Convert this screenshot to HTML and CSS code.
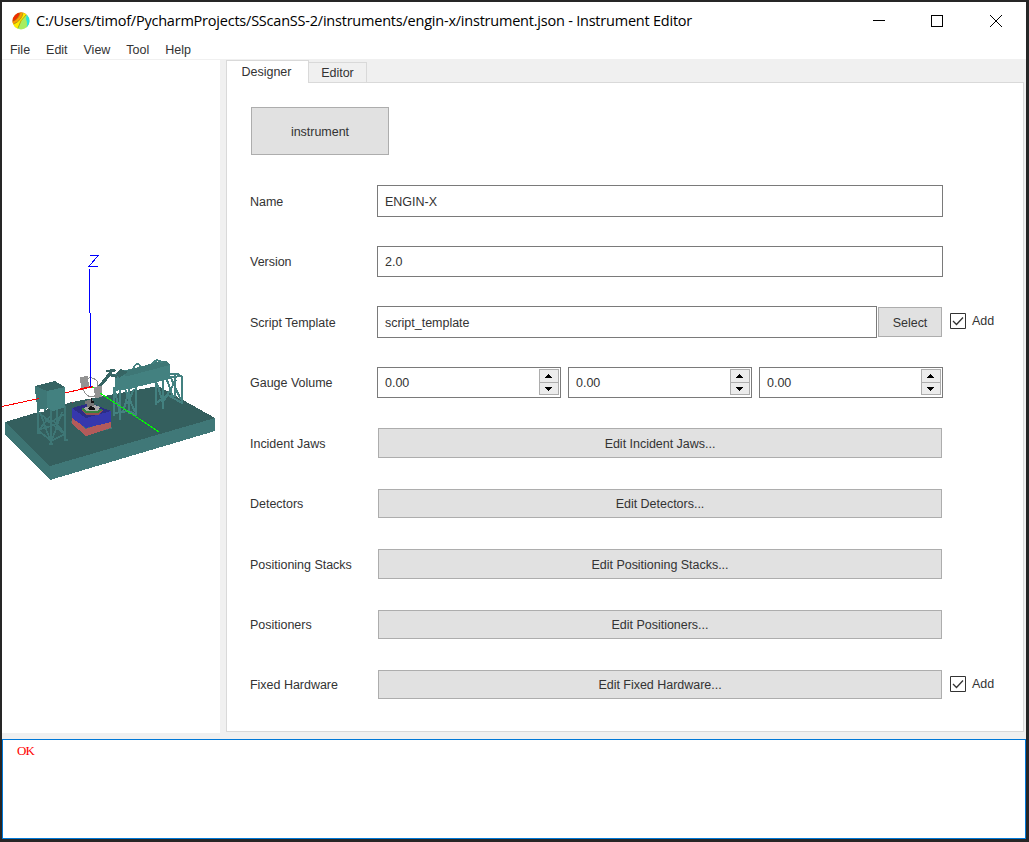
FILE: index.html
```html
<!DOCTYPE html>
<html lang="en">
<head>
<meta charset="utf-8">
<title>Instrument Editor</title>
<link rel="stylesheet" href="styles.css">
</head>
<body>
<div class="window">
  <header class="titlebar">
    <svg class="app-icon" width="18" height="18" viewBox="0 0 18 18">
      <defs><clipPath id="disc"><circle cx="9" cy="9" r="8.5"/></clipPath></defs>
      <g clip-path="url(#disc)">
        <rect width="18" height="18" fill="#a8ed60"/>
        <path d="M0 0H18L8 7L2 11H0Z" fill="#ee2c00"/>
        <path d="M0 10Q7 7 8 0H12Q9 10 0 13Z" fill="#ff9d00"/>
        <path d="M0 13Q10 9 11 0H16Q11 7 9 10Q7 14 5 18H0Z" fill="#ffed00"/>
        <path d="M15 1L18 3V18H14Q16 12 14 7Z" fill="#27e3dc"/>
        <path d="M1 9Q7 7 8 1M2 12Q10 8 11 1M6 16Q8 8 14 3" fill="none" stroke="#857b20" stroke-width=".6"/>
      </g>
    </svg>
    <h1 class="title">C:/Users/timof/PycharmProjects/SScanSS-2/instruments/engin-x/instrument.json - Instrument Editor</h1>
    <svg class="controls" width="132" height="14" viewBox="0 0 132 14" shape-rendering="crispEdges">
      <path d="M0 6.5H12M58.500 1.500H69.500V12.500H58.500Z" fill="none" stroke="#000"/>
      <path d="M117 1L129 13M129 1L117 13" fill="none" stroke="#000" shape-rendering="auto"/>
    </svg>
  </header>
  <nav class="menu"><span>File</span><span>Edit</span><span>View</span><span>Tool</span><span>Help</span></nav>
  <main class="workspace">
    <svg class="scene" width="218" height="673" viewBox="2 60 218 673" shape-rendering="crispEdges">
      <path d="M5 422L72 402L158 386L215 418L50 466Z" fill="#345f5e"/>
      <path d="M5 422L50 466V480L5 434Z" fill="#3d7473"/>
      <path d="M50 466L215 418V431L50 480Z" fill="#407878"/>
      <path d="M2 406.500L92 387" stroke="#f00" fill="none"/>
      <!-- shielding box on its stand -->
      <g fill="none" stroke="#3e7776" stroke-width="1.6">
        <path d="M38 405V432M51 409V444M65 406V440M57 402V428M38 430L51 441L65 434L57 424L38 430M39 413L51 422L65 414M40 412L50 440M62 412L52 440M39 430L50 416M53 420L64 434M44 418L62 432"/>
        <path d="M37 433H41M49 444H53M64 440H68"/>
      </g>
      <path d="M35 386L55 381L65 387V407L53 411L36 402Z" fill="#438180"/>
      <path d="M35 386L55 381L65 387L47 391Z" fill="#366463"/>
      <path d="M35 386L47 391V408L36 402Z" fill="#3e7776"/>
      <path d="M36 399L41 397L48 408L43 412L39 411Z" fill="#3e7776"/>
      <path d="M40 409H44V412H40Z" fill="#fff"/>
      <path d="M2 406.500L39 398.500" stroke="#f00" fill="none"/>
      <!-- guide on trestles -->
      <g fill="none" stroke="#438180" stroke-width="2">
        <path d="M114 387V416M120 387V420M129 387V414M136 386V416M114 390L136 387M114 413L129 411L136 415M115 391L120 414M129 390L123 412M125 389L135 412M134 389L127 404"/>
        <path d="M156 379V405M163 381V409M175 375V397M182 377V404M156 382L163 378L182 376M156 403L168 395L182 403M157 383L163 403M163 402L176 380M171 378L181 400M167 380L173 397"/>
      </g>
      <path d="M115 374L121 371L166 361L170 365V379L132 388L115 389Z" fill="#438180"/>
      <path d="M115 374L157 362L167 361L170 365L128 376Z" fill="#3e7776"/>
      <path d="M116 373L121 369L128 372L119 378Z" fill="#366564"/>
      <path d="M133 369Q137 360 141 367M152 364Q157 357 162 363M169 374H178L183 378" fill="none" stroke="#438180" stroke-width="2"/>
      <path d="M98 386L110 371L112 374L102 386Z" fill="#366463"/>
      <path d="M106 370L114 369L116 371L111 373L106 372ZM108 373L117 375V378L109 376Z" fill="#366463"/>
      <!-- positioning table -->
      <path d="M70 422L77 418L114 428L89 434Z" fill="#407878"/>
      <path d="M72 417L86 429L111 420V428L86 436L72 424Z" fill="#b35b5a"/>
      <path d="M72 408L90 403L111 411V422L86 428L72 418Z" fill="#3638ad"/>
      <path d="M72 408L90 403L111 411L86 418Z" fill="#2c2d87"/>
      <path d="M81 410L91 406L103 410L99 415L86 415Z" fill="#96504f"/>
      <path d="M81 409L91 405L103 410L98 413L86 413Z" fill="#36833f"/>
      <path d="M84 408L91 404L100 407L98 411L86 411Z" fill="#aaa"/>
      <path d="M85 401L91 399L94 402V406L87 407V404H85Z" fill="#777"/>
      <path d="M91 398H92V401H94V403H91ZM88 408L91 406L95 408V410H89Z" fill="#111"/>
      <path d="M83 382Q90 374 97 381L98 388M83 389Q87 400 97 395" fill="none" stroke="#909090"/>
      <path d="M80 377L88 376L89 387L81 388Z" fill="#939393"/>
      <path d="M94 387L102 386V397L95 398Z" fill="#929292"/>
      <path d="M72 402H73V403H72Z" fill="#a35"/>
      <path d="M80 389L93 386" stroke="#f00" fill="none"/>
      <path d="M89.500 269V313M90.500 313V387M90 255.500H98L89 266.500H98" stroke="#00f" fill="none"/>
      <path d="M92 387H94M100 393L159 432" stroke="#0f0" fill="none"/>
    </svg>
    <section class="panel">
      <div class="tabs"><span class="tab active">Designer</span><span class="tab">Editor</span></div>
      <div class="page">
        <button class="crumb">instrument</button>
        <div class="form">
          <div class="row"><label>Name</label><div class="field">ENGIN-X</div></div>
          <div class="row short"><label>Version</label><div class="field">2.0</div></div>
          <div class="row"><label>Script Template</label><div class="field script">script_template</div><button class="select">Select</button><span class="check"><svg width="16" height="16" viewBox="0 0 16 16"><path d="M.5.5H15.500V15.500H.5Z" fill="#fff" stroke="#333"/><path d="M3 8L6.500 11.500L13 4.500" fill="none" stroke="#333" stroke-width="1.300"/></svg>Add</span></div>
          <div class="row spins"><label>Gauge Volume</label>
            <div class="field spin">0.00<svg width="21" height="27" viewBox="0 0 21 27" shape-rendering="crispEdges"><path d="M.5.5H19.500V25.500H.5ZM.5 13.500H19.500" fill="#ececec" stroke="#adadad"/><path d="M6 9H13L10 5H9ZM6 18H13L10 22H9Z"/></svg></div>
            <div class="field spin">0.00<svg width="21" height="27" viewBox="0 0 21 27" shape-rendering="crispEdges"><path d="M.5.5H19.500V25.500H.5ZM.5 13.500H19.500" fill="#ececec" stroke="#adadad"/><path d="M6 9H13L10 5H9ZM6 18H13L10 22H9Z"/></svg></div>
            <div class="field spin">0.00<svg width="21" height="27" viewBox="0 0 21 27" shape-rendering="crispEdges"><path d="M.5.5H19.500V25.500H.5ZM.5 13.500H19.500" fill="#ececec" stroke="#adadad"/><path d="M6 9H13L10 5H9ZM6 18H13L10 22H9Z"/></svg></div>
          </div>
          <div class="row jaws"><label>Incident Jaws</label><button class="edit">Edit Incident Jaws...</button></div>
          <div class="row slim"><label>Detectors</label><button class="edit">Edit Detectors...</button></div>
          <div class="row stacks"><label>Positioning Stacks</label><button class="edit">Edit Positioning Stacks...</button></div>
          <div class="row slim"><label>Positioners</label><button class="edit">Edit Positioners...</button></div>
          <div class="row slim"><label>Fixed Hardware</label><button class="edit">Edit Fixed Hardware...</button><span class="check"><svg width="16" height="16" viewBox="0 0 16 16"><path d="M.5.5H15.500V15.500H.5Z" fill="#fff" stroke="#333"/><path d="M3 8L6.500 11.500L13 4.500" fill="none" stroke="#333" stroke-width="1.300"/></svg>Add</span></div>
        </div>
      </div>
    </section>
  </main>
  <section class="log">OK</section>
</div>
</body>
</html>
```
FILE: styles.css
```css
* { box-sizing: border-box; }
body {
  margin: 0;
  width: 1029px;
  height: 842px;
  padding: 2px 3px 3px 2px;
  background: #262626;
  overflow: hidden;
  color: #333;
  font: 12.5px/16px "Liberation Sans", Arial, sans-serif;
  letter-spacing: -0.02px;
}
.window { width: 1024px; height: 837px; background: #f0f0f0; display: flex; flex-direction: column; }
.titlebar { height: 38px; background: #fff; display: flex; align-items: center; padding-left: 10px; }
.app-icon { flex: none; margin-top: -1px; }
.title {
  margin: 0 0 0 6px;
  width: 837px;
  flex: none;
  color: #000;
  font: 400 14.5px/20px "Open Sans", "Noto Sans", sans-serif;
  letter-spacing: -0.22px;
  white-space: nowrap;
}
.controls { flex: none; margin-top: -1px; }
.menu { height: 19px; background: #fff; display: flex; gap: 16px; padding: 2px 8px 0; }
.workspace { height: 680px; padding-top: 1px; display: flex; }
.scene { flex: none; display: block; background: #fff; height: 673px; }
.panel { margin-left: 6px; width: 798px; display: flex; flex-direction: column; height: 672px; }
.tabs { height: 22px; display: flex; align-items: flex-end; position: relative; }
.tab { width: 58px; height: 20px; border: 1px solid #d9d9d9; border-width: 1px 1px 0 0; text-align: center; line-height: 20px; }
.tab.active { width: 83px; height: 23px; margin-bottom: -1px; background: #fff; border-width: 1px 1px 0; line-height: 22px; padding-right: 2px; }
.page { flex: 1; background: #fff; border: 1px solid #d9d9d9; padding: 24px 0 0 23px; }
button { font: inherit; letter-spacing: inherit; color: inherit; background: #e1e1e1; border: 1px solid #adadad; border-radius: 0; padding: 0; }
.crumb { display: block; width: 138px; height: 48px; margin-left: 1px; padding-top: 1px; }
.form { margin-top: 30px; display: grid; grid-template-rows: 61px 60px 61px 61px 61px 60px 61px 60px 60px; }
.row { display: flex; height: 32px; align-items: center; }
.row.short, .row.spins, .row.jaws { height: 31px; }
.row.slim { height: 29px; }
.row.stacks { height: 30px; }
label { width: 127px; flex: none; padding-top: 1px; }
.field { width: 566px; height: 100%; border: 1px solid #7a7a7a; background: #fff; padding: 1px 0 0 7px; display: flex; align-items: center; }
.script { width: 500px; }
.select { width: 64px; height: 30px; margin-left: 1px; padding-top: 1px; }
.spins { gap: 7px; }
.spins label { margin-right: -7px; }
.spin { width: 184px; justify-content: space-between; padding-top: 0; }
.spin svg { display: block; }
.edit { width: 564px; height: 100%; margin: 0 1px; padding-top: 1px; }
.jaws .edit { height: 30px; margin-bottom: 1px; }
.check { display: flex; align-items: center; gap: 6px; margin-left: 8px; height: 16px; }
.edit + .check { margin-left: 7px; margin-bottom: 1px; }
.script ~ .check { margin-bottom: 2px; }
.log { flex: 1; background: #fff; border: 1px solid #0078d7; padding: 3px 14px; color: #f00; font: 13px/15px "Liberation Serif", serif; letter-spacing: -1px; }
```
